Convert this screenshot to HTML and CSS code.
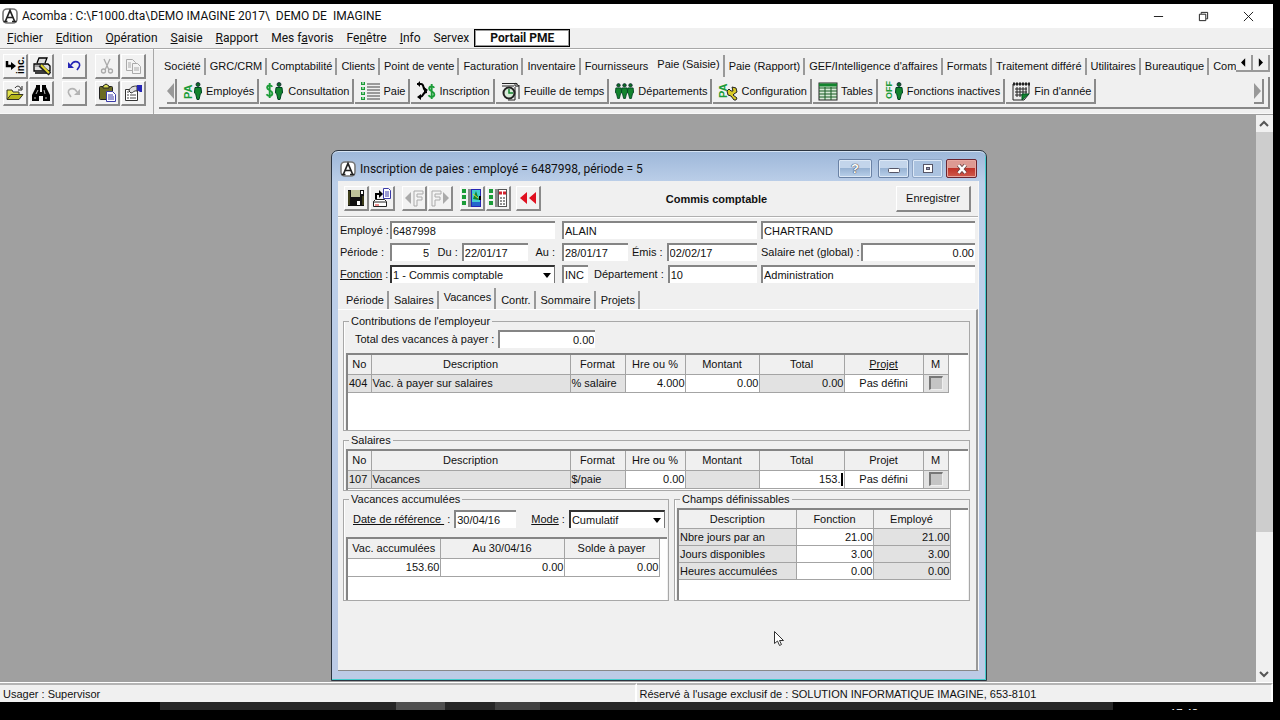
FILE: index.html
```html
<!DOCTYPE html>
<html lang="fr">
<head>
<meta charset="utf-8">
<title>Acomba</title>
<link rel="stylesheet" href="styles.css">
</head>
<body>
<svg class="defs" aria-hidden="true">
  <symbol id="logo" viewBox="0 0 16 16"><rect x="1" y="1" width="14" height="14" rx="4" fill="#fff" stroke="#777" stroke-width="1.600"/><path d="M3.500 13L8 2.500 12.500 13M5 9.500h6" fill="none" stroke="#222" stroke-width="1.700"/><path d="M1.500 13.500h4M10 13.500h4.500" stroke="#222" stroke-width="1.500"/></symbol>
  <symbol id="man" viewBox="0 0 8 18"><circle cx="4" cy="2.500" r="2" fill="#0b6b22" stroke="#123" stroke-width=".8"/><path d="M1 5.500h6l.6 5.500-1.200.6L5 17.500H3L1.600 11.600.4 11z" fill="#12842d" stroke="#042" stroke-width="1"/></symbol>
  <symbol id="dollar" viewBox="0 0 9 18"><path d="M7.500 5C6 3 2 3 2 6s5.500 2.500 5.500 6S3 15.500 1.300 13M4.700 1v16" fill="none" stroke="#1c9c38" stroke-width="2"/></symbol>
</svg>
<div class="screen">
<main class="app">
  <header class="titlebar">
    <svg class="i16"><use href="#logo"/></svg>
    <span class="app-title">Acomba : C:\F1000.dta\DEMO IMAGINE 2017\&nbsp; DEMO DE&nbsp; IMAGINE</span>
    <button class="wbtn" aria-label="Réduire"><svg viewBox="0 0 12 12"><path d="M1 6h10" /></svg></button>
    <button class="wbtn" aria-label="Restaurer"><svg viewBox="0 0 12 12"><path d="M1.500 3.500h7v7h-7zM3.500 3V1.500h7v7H9"/></svg></button>
    <button class="wbtn" aria-label="Fermer"><svg viewBox="0 0 12 12"><path d="M1 1l10 10M11 1L1 11"/></svg></button>
  </header>
  <nav class="menubar">
    <button><u>F</u>ichier</button><button><u>E</u>dition</button><button><u>O</u>pération</button><button><u>S</u>aisie</button><button><u>R</u>apport</button><button>Mes f<u>a</u>voris</button><button>Fe<u>n</u>être</button><button><u>I</u>nfo</button><button>Servex</button>
    <button class="portal">Portail PME</button>
  </nav>
  <div class="toolbar">
    <div class="tools">
      <button class="tool" aria-label="Incrémenter"><svg viewBox="0 0 20 20"><path d="M2 5v5h5" fill="none" stroke="#000" stroke-width="2.500"/><path d="M6 6l5 4-5 4z"/><text transform="translate(19 18) rotate(-90)" font-size="10" font-weight="bold" font-family="Liberation Sans">inc.</text></svg></button>
      <button class="tool" aria-label="Imprimer"><svg viewBox="0 0 20 20"><path d="M6 7l2-5h8l-2 5M3 8h14l2 2v5H3zM4 17h12" fill="#ddd" stroke="#000" stroke-width="1.300"/><path d="M4 10h9" stroke="#666"/><path d="M9 9l4 4 6 5" stroke="#222" stroke-width="4"/><path d="M10 9l4 4 4 4" stroke="#e0d62c" stroke-width="2"/></svg></button>
      <button class="tool" aria-label="Annuler"><svg viewBox="0 0 20 20"><path d="M7 9c3-6 11-3 8 2l-2 3" fill="none" stroke="#2525b5" stroke-width="1.600"/><path d="M4 6v6h6z" fill="#2525b5"/></svg></button>
      <button class="tool" aria-label="Couper"><svg viewBox="0 0 20 20"><g fill="none" stroke="#aaa" stroke-width="1.300"><path d="M7 3l5 11M13 3L8 14"/><circle cx="6.500" cy="15" r="2"/><circle cx="13.500" cy="15" r="2"/></g></svg></button>
      <button class="tool" aria-label="Copier"><svg viewBox="0 0 20 20"><g fill="#f4f4f4" stroke="#aaa"><path d="M3.500 3.500h6l3 3v8h-9z"/><path d="M9.500 7.500h5l3 3v7h-8z"/><path d="M5 7h3M5 9h3M5 11h3M11 12h5M11 14h5"/></g></svg></button>
      <button class="tool" aria-label="Ouvrir"><svg viewBox="0 0 20 20"><path d="M2 16V7h5l1 2h6v3" fill="#e4e44c" stroke="#332"/><path d="M2 16.500l4-5h12l-4 5z" fill="#b5b51c" stroke="#332"/><path d="M10 5c2-3 5-2 6 1M17 3v4h-4" fill="none" stroke="#222"/></svg></button>
      <button class="tool" aria-label="Rechercher"><svg viewBox="0 0 20 20"><path d="M1 18V12l4-8h4v5h2V4h4l4 8v6h-7v-5H8v5z"/><path d="M5 3h4M11 3h4" stroke="#000" stroke-width="2"/><path d="M5 11l2-4M14 11l-1-4M4 14v2M15 14v2" stroke="#bbb"/></svg></button>
      <button class="tool" aria-label="Rétablir"><svg viewBox="0 0 20 20"><path d="M13 9C10 3 2 6 5 11l2 3" fill="none" stroke="#b4b4b4" stroke-width="1.600"/><path d="M16 6v6h-6z" fill="#b4b4b4"/></svg></button>
      <button class="tool" aria-label="Coller"><svg viewBox="0 0 20 20"><rect x="2.500" y="3.500" width="13" height="13" rx="1" fill="#6b6b24" stroke="#222"/><path d="M6 5V3l3-2 3 2v2z" fill="#dede55" stroke="#222"/><path d="M9.500 8.500h6l3 3v7h-9z" fill="#fff" stroke="#3b3ba8"/><path d="M11 12h5M11 14h6M11 16h6" stroke="#3b3ba8"/></svg></button>
      <button class="tool" aria-label="Propriétés"><svg viewBox="0 0 20 20"><path d="M2.500 6.500h12v11h-12z" fill="#fff" stroke="#333"/><path d="M4 9h2M4 12h2M4 15h2M7 12h6M7 15h6" stroke="#444"/><path d="M6 8c1-4 4-5 8-5v5c-3-1-4 2-6 2z" fill="#ddd" stroke="#333"/><path d="M14 2h5v7h-2l-3-2z" fill="#2525b5"/></svg></button>
    </div>
    <div class="modules">
      <div class="tabrow">
        <div class="tabs">
          <button>Société</button><button>GRC/CRM</button><button>Comptabilité</button><button>Clients</button><button>Point de vente</button><button>Facturation</button><button>Inventaire</button><button class="before">Fournisseurs</button><button class="active">Paie (Saisie)</button><button>Paie (Rapport)</button><button>GEF/Intelligence d'affaires</button><button>Formats</button><button>Traitement différé</button><button>Utilitaires</button><button>Bureautique</button><button>Com</button>
        </div>
        <button class="spin" aria-label="Précédent"><svg viewBox="0 0 6 10"><path d="M5 0v10L0 5z"/></svg></button><button class="spin" aria-label="Suivant"><svg viewBox="0 0 6 10"><path d="M1 0v10l5-5z"/></svg></button>
      </div>
      <div class="actions">
        <button class="scroll" aria-label="Défiler à gauche"><svg viewBox="0 0 7 16"><path d="M7 0v16L0 8z" fill="#999"/></svg></button>
        <button><svg viewBox="0 0 20 20"><text transform="translate(9 18) rotate(-90)" font-size="11" font-weight="bold" font-family="Liberation Sans" fill="#1c9c38">PA</text><use href="#man" x="11" y="1" width="8" height="18"/></svg>Employés</button>
        <button><svg viewBox="0 0 20 20"><use href="#dollar" x="0" y="1" width="9" height="17"/><use href="#man" x="10" y="1" width="8" height="18"/></svg>Consultation</button>
        <button><svg viewBox="0 0 20 20"><path d="M7 3h13M7 6h13M7 9h13M7 12h13M7 15h13M7 18h13" stroke="#444"/><path d="M3 1v18" stroke="#1c9c38" stroke-width="4" stroke-dasharray="3 2"/><path d="M3 1v18" stroke="#fff" stroke-dasharray="2 3"/></svg>Paie</button>
        <button><svg viewBox="0 0 20 20"><path d="M1 3h4c4 0 1 6 5 6M11 11c-5 0-3 5-7 5" fill="none" stroke="#000" stroke-width="2"/><path d="M8 6v6l4-3zM1 16l4-3v6zM4 0v6L1 3z"/><use href="#dollar" x="11" y="2" width="9" height="17"/></svg>Inscription</button>
        <button><svg viewBox="0 0 20 20"><path d="M1 2.500h15v3M1 5h12M14 6v13H7M18 4v14" fill="none" stroke="#222"/><path d="M14 2l4 3h-4z" fill="#fff" stroke="#222"/><circle cx="8" cy="12" r="5.500" fill="#d9ead9" stroke="#222" stroke-width="2"/><path d="M8 8v4h4" fill="none" stroke="#12842d" stroke-width="1.500"/></svg>Feuille de temps</button>
        <button><svg viewBox="0 0 20 20"><use href="#man" x="0" y="1" width="7" height="18"/><use href="#man" x="6" y="1" width="7" height="18"/><use href="#man" x="12" y="1" width="7" height="18"/></svg>Départements</button>
        <button><svg viewBox="0 0 20 20"><text transform="translate(9 17) rotate(-90)" font-size="11" font-weight="bold" font-family="Liberation Sans" fill="#1c9c38">PA</text><path d="M9 10l2-2 2 2h2l-1-4 4 1 1 4-3 2-1 1 4 3-1 2-2 0-3-4-3-1z" fill="#d9c927" stroke="#222"/></svg>Configuration</button>
        <button><svg viewBox="0 0 20 20"><rect x="1" y="2" width="18" height="17" fill="#d7ead7" stroke="#222"/><path d="M1 4h18" stroke="#12842d" stroke-width="3"/><path d="M1 7h18M1 10h18M1 13h18M1 16h18M7 6v13M13 6v13" stroke="#175a22"/></svg>Tables</button>
        <button><svg viewBox="0 0 20 20"><text transform="translate(8 18) rotate(-90)" font-size="9" font-weight="bold" font-family="Liberation Sans" fill="#1c9c38">OFF</text><use href="#man" x="11" y="1" width="8" height="18"/></svg>Fonctions inactives</button>
        <button><svg viewBox="0 0 20 20"><path d="M2 3h16v10l-5 6H2z" fill="#eee" stroke="#222"/><path d="M2 3h17" stroke="#222" stroke-width="3" stroke-dasharray="2 1"/><path d="M4 8h12M4 11h12M4 14h9M6 6v10M9 6v10M12 6v10M15 6v7" stroke="#222"/><path d="M11 19v-6h7z" fill="#12842d" stroke="#052"/></svg>Fin d'année</button>
        <button class="scroll last" aria-label="Défiler à droite"><svg viewBox="0 0 7 16"><path d="M0 0v16l7-8z" fill="#999"/></svg></button>
      </div>
    </div>
  </div>
  <div class="desk">
    <div class="canvas">
      <section class="window">
        <div class="wtitle">
          <svg class="i16"><use href="#logo"/></svg>
          <h1>Inscription de paies : employé = 6487998, période = 5</h1>
          <button class="cap help" aria-label="Aide">?</button>
          <button class="cap" aria-label="Réduire"><svg viewBox="0 0 12 10"><rect x=".5" y="4.500" width="11" height="4" rx="1" fill="#fff" stroke="#556"/></svg></button>
          <button class="cap flat" aria-label="Agrandir"><svg viewBox="0 0 12 10"><rect x="1.500" y=".5" width="9" height="8" fill="#fff" stroke="#556"/><rect x="4.500" y="3.500" width="3" height="2" fill="#99b" stroke="#556"/></svg></button>
          <button class="cap close" aria-label="Fermer"><svg viewBox="0 0 12 10"><path d="M2.500 1l7 8M9.500 1l-7 8" stroke="#644" stroke-width="4"/><path d="M2.500 1l7 8M9.500 1l-7 8" stroke="#fff" stroke-width="2.500"/></svg></button>
        </div>
        <div class="client">
          <div class="wtools">
            <button class="tool" aria-label="Sauvegarder"><svg viewBox="0 0 20 20"><path d="M2 2h16v16H2z" fill="#111"/><path d="M5 2h9v7H5z" fill="#bfc39a"/><path d="M15 3h2v3h-2zM11 13h3v4h-3z" fill="#fff"/><path d="M3 3v14M17 8v9" stroke="#6b6b24"/></svg></button>
            <button class="tool" aria-label="Transférer"><svg viewBox="0 0 20 20"><path d="M4 11V6h4" fill="none" stroke="#000" stroke-width="2"/><path d="M7 2v8l4-4z"/><path d="M11.500.5h5l2 2v8h-7z" fill="#fff" stroke="#3b3ba8"/><path d="M13 4h4M13 6h4M13 8h4" stroke="#3b3ba8"/><path d="M1.500 13.500l2-2h9l2 2v5h-13zM1 14h13" fill="#fff" stroke="#222"/><path d="M3 17h4" stroke="#d22"/></svg></button>
            <button class="tool gap" aria-label="Fonction précédente"><svg viewBox="0 0 20 20"><path d="M7 4v12L1 10z" fill="#aaa"/><path d="M10 3h9v3h-6v3h5v3h-5v6h-3z" fill="#f4f4f4" stroke="#aaa"/></svg></button>
            <button class="tool" aria-label="Fonction suivante"><svg viewBox="0 0 20 20"><path d="M13 4v12l6-6z" fill="#aaa"/><path d="M2 3h9v3H5v3h5v3H5v6H2z" fill="#f4f4f4" stroke="#aaa"/></svg></button>
            <button class="tool gap" aria-label="Profil"><svg viewBox="0 0 20 20"><path d="M2 1v18" stroke="#1c9c38" stroke-width="4" stroke-dasharray="4 2"/><path d="M6 2h5M6 4h5M6 6h5M6 8h5M6 10h5M6 12h5M6 14h5M6 16h5M6 18h5" stroke="#222"/><rect x="9.500" y="1.500" width="9" height="17" fill="#42cbd0" stroke="#2525b5"/><path d="M11 11l3-8 3 9z" fill="#12842d"/><path d="M11 6l5 4" stroke="#e4db35"/><path d="M10 14h8v4h-8z" fill="#26c"/><path d="M18 8v4" stroke="#000" stroke-width="2"/></svg></button>
            <button class="tool" aria-label="Calculatrice"><svg viewBox="0 0 20 20"><path d="M3 1v18" stroke="#1c9c38" stroke-width="4" stroke-dasharray="4 2"/><path d="M7 2h4M7 4h4M7 6h4M7 8h4M7 10h4M7 12h4M7 14h4M7 16h4M7 18h4" stroke="#222"/><rect x="10.500" y="1.500" width="8" height="17" fill="#fff" stroke="#555"/><path d="M11 5h7" stroke="#d3222e" stroke-width="3" stroke-dasharray="3 1"/><path d="M12 10h2M15 10h2M12 13h2M15 13h2M12 16h2M15 16h2" stroke="#222"/></svg></button>
            <button class="tool mini" aria-label="Reculer"><svg viewBox="0 0 20 20"><path d="M9 4v12L2 10zM18 4v12l-7-6z" fill="#e01020"/></svg></button>
            <strong>Commis comptable</strong>
            <button class="save">Enregistrer</button>
          </div>
          <form class="fields">
            <label for="emp">Employé :</label><input id="emp" value="6487998">
            <input class="mid" aria-label="Prénom" value="ALAIN"><input aria-label="Nom" value="CHARTRAND">
            <label for="per">Période :</label>
            <div class="line spread"><input id="per" class="num per" value="5"><div class="line"><label for="du">Du :</label><input id="du" class="date" value="22/01/17"></div><label for="au">Au :</label></div>
            <div class="line mid"><input id="au" class="date" value="28/01/17"><label for="emis">Émis :</label><input id="emis" class="grow" value="02/02/17"></div>
            <div class="line tight"><label for="net">Salaire net (global) :</label><input id="net" class="num grow" value="0.00"></div>
            <label for="fon"><u>Fonction</u> :</label>
            <div class="pick"><select id="fon"><option>1 - Commis comptable</option></select></div>
            <div class="line mid"><input class="inc" aria-label="Type" value="INC"><label for="dep" class="depl">Département :</label><input id="dep" class="grow" value="10"></div>
            <input aria-label="Nom du département" value="Administration">
          </form>
          <div class="subtabs"><button>Période</button><button>Salaires</button><button class="active">Vacances</button><button>Contr.</button><button>Sommaire</button><button>Projets</button></div>
          <div class="page">
            <fieldset class="contrib"><legend>Contributions de l'employeur</legend>
              <div class="line total"><label for="tot">Total des vacances à payer :</label><input id="tot" class="num" value="0.00"></div>
              <div class="grid"><table>
                <colgroup><col class="c23"><col class="c199"><col class="c55"><col class="c60"><col class="c74"><col class="c85"><col class="c79"><col class="c25"></colgroup>
                <tr><th>No</th><th>Description</th><th>Format</th><th>Hre ou %</th><th>Montant</th><th>Total</th><th><u>Projet</u></th><th>M</th></tr>
                <tr><td class="g">404</td><td class="g">Vac. à payer sur salaires</td><td class="g">% salaire</td><td class="r">4.000</td><td class="r">0.00</td><td class="g r">0.00</td><td class="m">Pas défini</td><td class="g m"><input type="checkbox" aria-label="M 404"></td></tr>
              </table></div>
            </fieldset>
            <fieldset class="salaries"><legend>Salaires</legend>
              <div class="grid"><table>
                <colgroup><col class="c23"><col class="c199"><col class="c55"><col class="c60"><col class="c74"><col class="c85"><col class="c79"><col class="c25"></colgroup>
                <tr><th>No</th><th>Description</th><th>Format</th><th>Hre ou %</th><th>Montant</th><th>Total</th><th>Projet</th><th>M</th></tr>
                <tr><td class="g">107</td><td class="g">Vacances</td><td class="g">$/paie</td><td class="r">0.00</td><td class="g"></td><td class="r"><div class="edit"><input aria-label="Total" value="153."><i class="caret"></i></div></td><td class="m">Pas défini</td><td class="g m"><input type="checkbox" aria-label="M 107"></td></tr>
              </table></div>
            </fieldset>
            <div class="pair">
              <fieldset class="accum"><legend>Vacances accumulées</legend>
                <div class="line ref"><label for="ref"><u>Date de référence&nbsp;</u> :</label><input id="ref" class="date" value="30/04/16"><label for="mode" class="model"><u>Mode</u> :</label><div class="pick grow"><select id="mode"><option>Cumulatif</option></select></div></div>
                <div class="grid"><table>
                  <colgroup><col class="c92"><col class="c124"><col class="c95"></colgroup>
                  <tr><th>Vac. accumulées</th><th>Au 30/04/16</th><th>Solde à payer</th></tr>
                  <tr><td class="r">153.60</td><td class="r">0.00</td><td class="r">0.00</td></tr>
                </table></div>
              </fieldset>
              <fieldset class="champs"><legend>Champs définissables</legend>
                <div class="grid"><table>
                  <colgroup><col class="c117"><col class="c77"><col class="c77"></colgroup>
                  <tr><th>Description</th><th>Fonction</th><th>Employé</th></tr>
                  <tr><td class="g">Nbre jours par an</td><td class="r">21.00</td><td class="g r">21.00</td></tr>
                  <tr><td class="g">Jours disponibles</td><td class="r">3.00</td><td class="g r">3.00</td></tr>
                  <tr><td class="g">Heures accumulées</td><td class="r">0.00</td><td class="g r">0.00</td></tr>
                </table></div>
              </fieldset>
            </div>
          </div>
        </div>
      </section>
    </div>
    <div class="vscroll"><button aria-label="Haut"><svg viewBox="0 0 10 8"><path d="M1 6l4-4 4 4"/></svg></button><div class="thumb"></div><button aria-label="Bas"><svg viewBox="0 0 10 8"><path d="M1 2l4 4 4-4"/></svg></button></div>
  </div>
  <footer class="status"><span>Usager : Supervisor</span><span>Réservé à l'usage exclusif de : SOLUTION INFORMATIQUE IMAGINE, 653-8101</span></footer>
</main>
<div class="taskbar"><div class="tasks"><i></i><b></b></div><div class="clock">17:48</div></div>
</div>
<svg class="cursor" viewBox="0 0 10 16"><path d="M.5.5v12l3-2.500 2 4.500 2-1-2-4h4z" fill="#fff" stroke="#333"/></svg>
</body>
</html>
```
FILE: styles.css
```css
* { box-sizing: border-box; }
body { margin: 0; background: #000; color: #111; font: 11px/16px "Liberation Sans", Arial, sans-serif; }
button, input, select { font: inherit; color: inherit; border-radius: 0; margin: 0; }
button { background: none; border: 0; padding: 0; white-space: nowrap; }
svg { display: block; flex: none; }
.defs { position: absolute; width: 0; height: 0; }
.screen { min-height: 100vh; display: flex; flex-direction: column; padding-top: 4px; }
.app { flex: 1; margin-right: 7px; display: flex; flex-direction: column; background: #f0f0f0; }
.i16 { width: 16px; height: 16px; }

.titlebar { display: flex; align-items: center; height: 24px; padding: 0 2px; background: #fff; font-family: Roboto, sans-serif; font-size: 12px; }
.app-title { flex: 1; padding-left: 4px; white-space: nowrap; }
.wbtn { width: 45px; height: 24px; display: flex; align-items: center; justify-content: center; }
.wbtn svg { width: 11px; height: 11px; fill: none; stroke: #111; }
.menubar { display: flex; align-items: center; height: 20px; padding-left: 7px; gap: 13px; font-family: Roboto, sans-serif; font-size: 12px; }
.menubar .portal { height: 18px; width: 96px; margin-left: -8px; background: #fff; border: 1px solid #000; outline: 1px solid #999; outline-offset: -2px; font-weight: bold; line-height: 14px; }

.toolbar { display: flex; height: 67px; padding-left: 3px; border-top: 1px solid #a8a8a8; border-bottom: 1px solid #a0a0a0; box-shadow: inset 0 1px #fff, inset 0 -1px #f8f8f8; }
.tools { display: grid; grid-template-columns: 25px 25px 32px 32px 25px; column-gap: 1px; row-gap: 2px; align-content: start; justify-items: end; padding: 5px 7px 0 0; border-right: 1px solid #a8a8a8; }
.tool { width: 25px; height: 25px; display: flex; align-items: center; justify-content: center; background: #f2f2f2; border: 1px solid #fff; border-right: 2px solid #8a8a8a; border-bottom: 2px solid #8a8a8a; }
.tool svg { width: 20px; height: 20px; }
.modules { flex: 1; min-width: 0; padding: 6px 3px 3px 5px; }
.tabrow { display: flex; align-items: flex-start; height: 22px; }
.tabs { flex: 1; min-width: 0; display: flex; align-items: center; overflow: hidden; height: 22px; padding-left: 1px; }
.tabs button { flex: none; height: 17px; padding: 0 3px 0 4px; border-right: 2px solid #999; }
.tabs .before { border-right-color: transparent; }
.tabs .active { height: 22px; padding-bottom: 4px; }
.tabs button:last-child { border: 0; padding-right: 0; }
.spin { width: 17px; height: 17px; display: flex; align-items: center; justify-content: center; border-right: 2px solid #999; border-bottom: 2px solid #999; }
.spin svg { width: 5px; height: 9px; }
.actions { display: flex; height: 32px; padding: 2px 4px 3px 8px; border-right: 2px solid #888; border-bottom: 2px solid #888; }
.actions button { display: flex; align-items: center; gap: 3px; padding: 0 3px 0 5px; margin-right: 1px; border-right: 2px solid #8a8a8a; border-bottom: 2px solid #8a8a8a; }
.actions svg { width: 20px; height: 20px; }
.actions .scroll { padding: 0 1px 0 0; width: 10px; }
.actions .scroll svg { width: 7px; height: 16px; }
.actions .last { margin: 0 0 0 auto; }

.desk { flex: 1; display: flex; }
.canvas { flex: 1; position: relative; background: #a0a0a0; }
.vscroll { width: 17px; display: flex; flex-direction: column; background: #f0f0f0; }
.vscroll button { height: 17px; padding: 4px 3px; }
.vscroll svg { width: 10px; height: 8px; fill: none; stroke: #555; stroke-width: 2; }
.thumb { height: 400px; background: #cdcdcd; }
.vscroll button:last-child { margin-top: auto; }
.status { display: flex; height: 20px; border-top: 1px solid #fff; }
.status span { flex: 1; padding: 1px 3px; border-top: 2px solid #b4b4b4; border-right: 2px solid #fff; }
.taskbar { display: grid; grid-template-columns: 160px 1fr 167px; height: 18px; padding-bottom: 10px; }
.tasks { grid-column: 2; display: flex; background: #262626; }
.tasks i { width: 49px; margin-left: 236px; background: #4f4f4f; }
.tasks b { width: 45px; margin-left: 50px; background: #404040; }
.clock { padding: 4px 0 0 57px; overflow: hidden; color: #fff; font: 11px/13px "Open Sans", sans-serif; }

.window { position: absolute; left: 331px; top: 35px; width: 656px; height: 531px; padding: 0 7px 9px 6px; display: flex; flex-direction: column; background: linear-gradient(#9db7d9, #bccfe9 32px, #bccbe6); border: 1px solid #2b3440; border-radius: 7px 7px 0 0; box-shadow: inset 0 1px #d5e3f3, inset -1px -1px #4cc; }
.wtitle { display: flex; align-items: center; height: 30px; padding: 5px 2px 0; }
.wtitle h1 { flex: 1; margin: 0 0 0 4px; font: 12px/16px Roboto, sans-serif; white-space: nowrap; }
.cap { width: 31px; height: 19px; margin-left: 3px; display: flex; align-items: center; justify-content: center; border: 1px solid #6a82a5; border-radius: 2px; background: linear-gradient(#c3d5eb 45%, #98b3d3 50%, #b9d0ea); box-shadow: inset 0 0 0 1px #dce8f6; }
.cap svg { width: 12px; height: 10px; }
.cap.help { width: 34px; margin-right: 3px; font: bold 13px/14px "Liberation Sans", sans-serif; color: #fff; text-shadow: 0 0 1px #223, 0 0 1px #223; }
.flat { background: #abc3e0; border-color: #8ea5c5; }
.close { background: linear-gradient(#dd9a93 45%, #c03329 50%, #cf5a4c); border-color: #6a2430; box-shadow: inset 0 0 0 1px #e8a8a0; }
.client { flex: 1; display: flex; flex-direction: column; background: #f0f0f0; border-bottom: 1px solid #888; border-right: 1px solid #f8f8f8; }
.wtools { display: flex; align-items: center; height: 36px; padding: 0 7px 0 6px; border-bottom: 1px solid #b0b0b0; box-shadow: 0 1px #fff; }
.wtools .tool { margin-right: 1px; }
.wtools .tool.gap { margin-left: 6px; }
.wtools .mini { margin-left: 4px; }
.wtools strong { flex: 1; padding-right: 5px; text-align: center; }
.save { width: 75px; height: 26px; background: #f0f0f0; border: 1px solid #fff; border-right: 2px solid #888; border-bottom: 2px solid #888; }

input, select { min-width: 0; height: 18px; padding: 0 1px; background: #fff; border: 0; border-left: 2px solid #858585; border-top: 2px solid #858585; outline: 0; }
.num { text-align: right; }
.fields { display: grid; grid-template-columns: 46px 165fr 198fr 214fr; gap: 4px; padding: 4px 3px 0 2px; align-items: center; }
.fields > * { min-width: 0; }
.fields .mid { margin-left: 3px; }
.line { display: flex; align-items: center; gap: 4px; }
.line label, .fields label { white-space: nowrap; }
.spread { justify-content: space-between; }
.tight { gap: 2px; }
.per { width: 40px; }
.date { width: 66px; }
.inc { width: 26px; }
.grow { flex: 1; }
.depl { padding-left: 2px; }
.pick { position: relative; display: flex; }
.pick select { width: 100%; appearance: none; border-color: #333; border-right: 1px solid #777; }
.pick::after { content: ""; position: absolute; right: 4px; top: 8px; border: 4px solid transparent; border-top: 5px solid #000; border-bottom: 0; }
.subtabs { display: flex; align-items: flex-end; height: 26px; padding-left: 3px; }
.subtabs button { height: 18px; padding: 0 3px 0 5px; border-right: 2px solid #999; }
.subtabs .active { height: 21px; padding-bottom: 3px; }
.page { flex: 1; padding: 3px 6px 0 5px; border-top: 1px solid #fff; border-right: 2px solid #999; }
fieldset { min-width: 0; margin: 0; padding: 0 1px 0 2px; border: 1px solid #a8a8a8; box-shadow: inset 1px 0 #fff; display: flex; flex-direction: column; }
legend { margin-left: 3px; padding: 0 2px; line-height: 16px; }
.contrib { height: 118px; margin-bottom: 1px; }
.salaries { height: 59px; }
.salaries .grid { margin-top: 1px; }
.total { padding: 1px 0 5px 9px; }
.total input { width: 97px; }
.grid { flex: 1; background: #fff; border-top: 2px solid #858585; border-left: 2px solid #858585; }
table { table-layout: fixed; border-collapse: collapse; width: 1px; }
th, td { height: 18px; padding: 0 1px; border-right: 1px solid #a4a4a4; border-bottom: 1px solid #a4a4a4; white-space: nowrap; line-height: 16px; }
th { background: #f0f0f0; font-weight: normal; height: 19px; }
.g { background: #e2e2e2; }
.r { text-align: right; padding-right: 0; }
.m { text-align: center; }
.c23 { width: 23px; } .c25 { width: 25px; } .c55 { width: 55px; } .c60 { width: 60px; } .c74 { width: 74px; } .c77 { width: 77px; } .c79 { width: 79px; } .c85 { width: 85px; } .c92 { width: 92px; } .c95 { width: 95px; } .c117 { width: 117px; } .c124 { width: 124px; } .c199 { width: 199px; }
input[type="checkbox"] { appearance: none; display: block; width: 14px; height: 14px; margin: 0 auto; background: #c4c4c4; border: 1px solid #eee; border-top: 2px solid #777; border-left: 2px solid #777; }
.edit { display: flex; align-items: center; padding-right: 1px; }
.edit input { flex: 1; height: 16px; border: 0; padding: 0; text-align: right; }
.caret { width: 2px; height: 13px; background: #000; }
.pair { display: grid; grid-template-columns: 326fr 296fr; gap: 5px; }
.pair fieldset { height: 110px; }
.ref { padding: 3px 2px 9px 7px; }
.ref .date { width: 62px; }
.model { margin-left: 11px; }
.champs .grid { margin-top: 1px; }
.champs th { height: 18px; }
.champs td { height: 17px; }
.cursor { position: absolute; left: 774px; top: 631px; width: 10px; height: 16px; }
```
